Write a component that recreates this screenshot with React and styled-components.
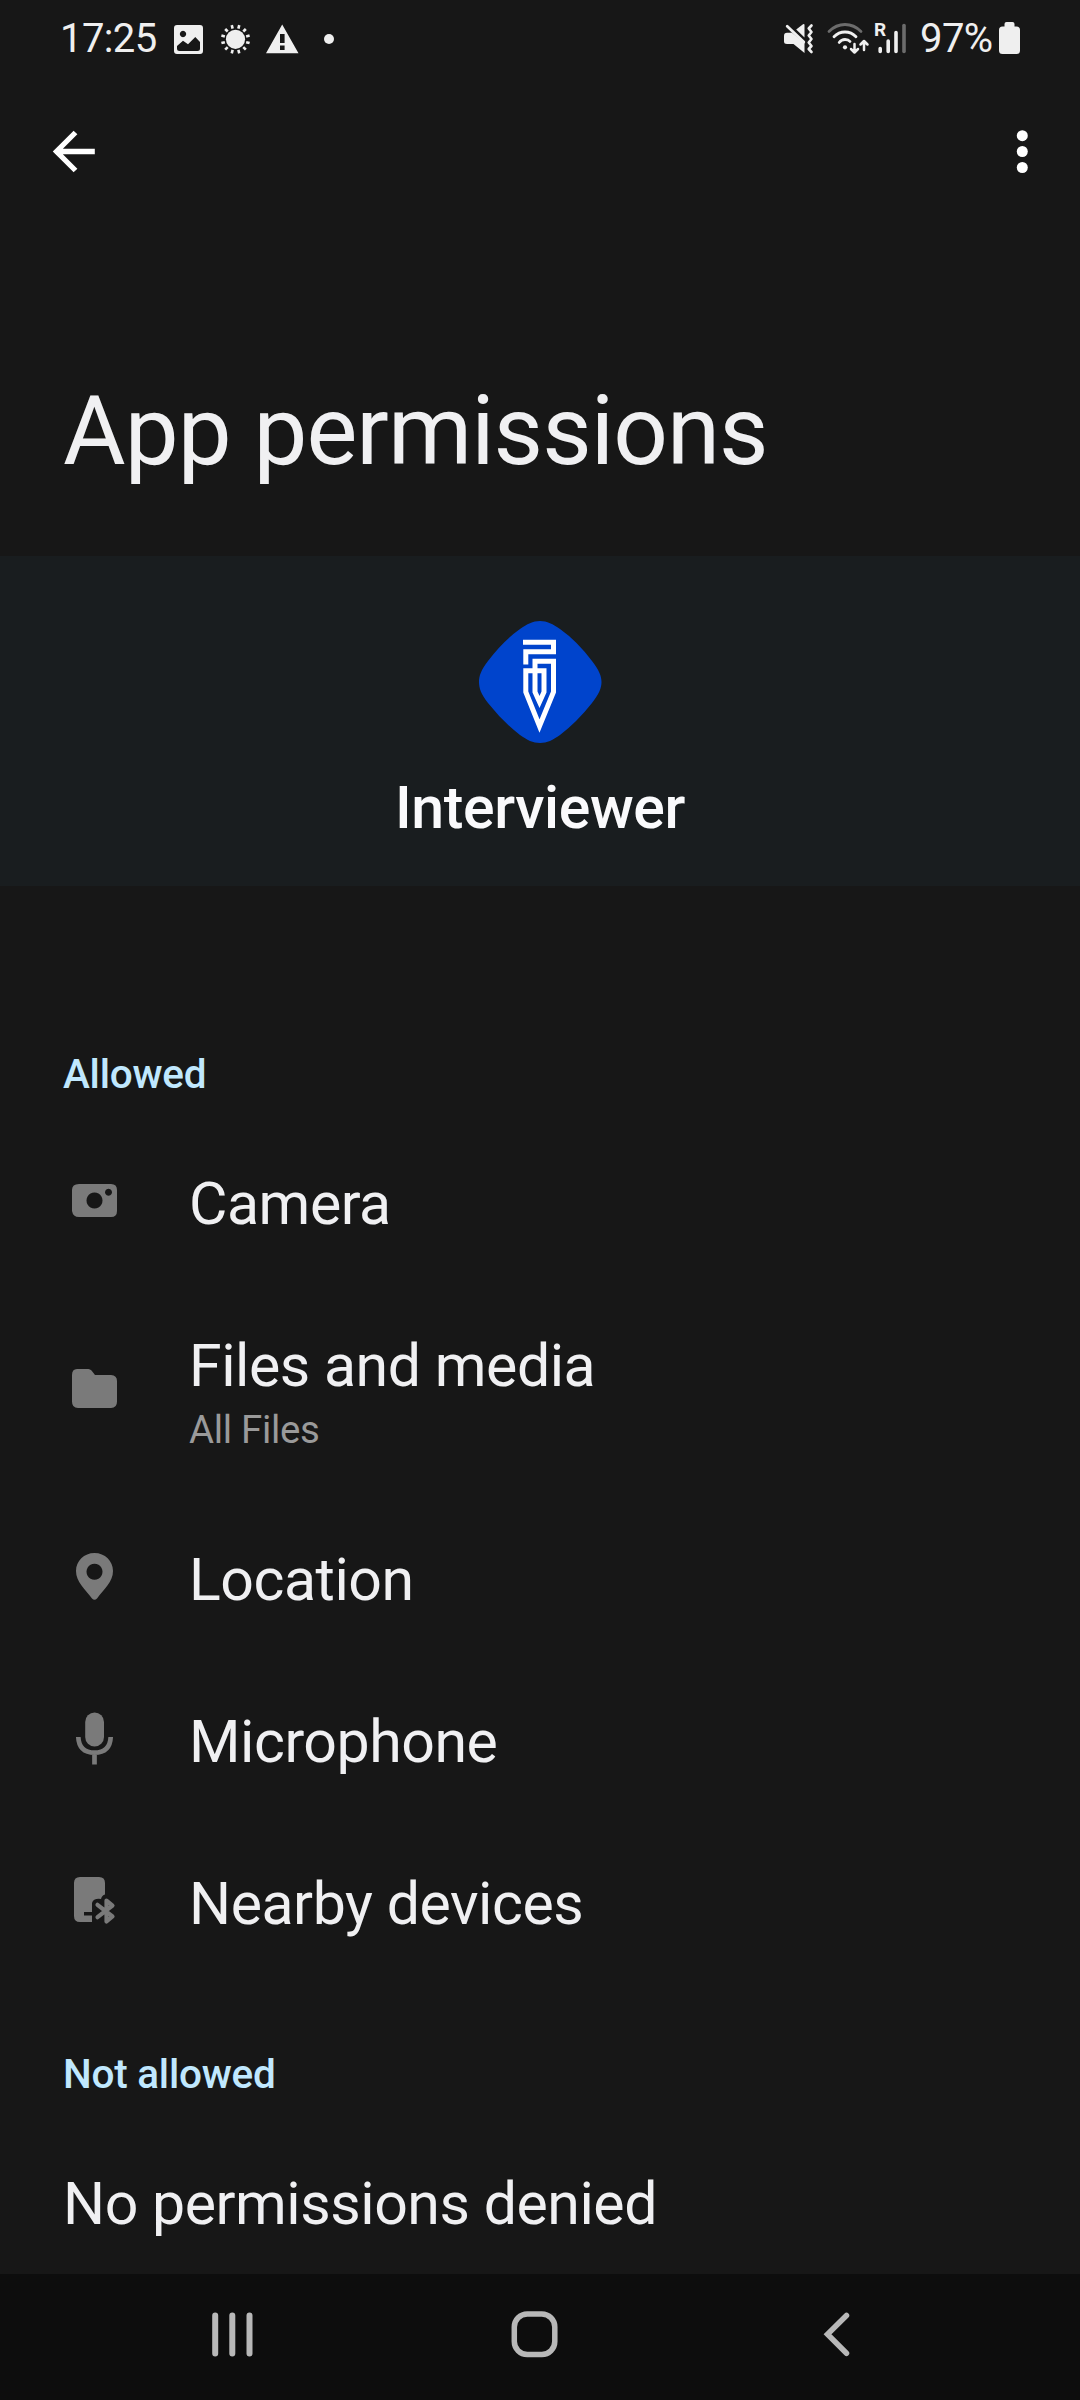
import React from "react";
import styled, { createGlobalStyle } from "styled-components";

const GlobalStyle = createGlobalStyle`
  body { margin: 0; background: #171717; }
  * { box-sizing: border-box; }
  svg { display: block; flex: none; }
`;

const Screen = styled.div`
  width: 1080px;
  height: 2400px;
  display: flex;
  flex-direction: column;
  overflow: hidden;
  background: #171717;
  color: #f0f0f2;
  font-family: Roboto, "Liberation Sans", sans-serif;
`;

const StatusBar = styled.header`
  height: 80px;
  flex: none;
  display: flex;
  justify-content: space-between;
  padding: 0 57px 0 60px;
  color: #efefef;
  font-size: 40px;
  line-height: 78px;
`;

const StatusGroup = styled.div`
  display: flex;
  white-space: nowrap;
`;

const StatusText = styled.span`
  width: ${(p) => p.$width}px;
  letter-spacing: -0.6px;
`;

const AppBar = styled.nav`
  height: 144px;
  flex: none;
  display: flex;
  justify-content: space-between;
  color: #fff;
`;

const Title = styled.h1`
  margin: 0;
  height: 332px;
  flex: none;
  padding: 151px 0 0 63px;
  font-size: 96px;
  font-weight: 400;
  line-height: 112px;
  letter-spacing: -0.95px;
`;

const AppHeader = styled.section`
  height: 330px;
  flex: none;
  display: flex;
  flex-direction: column;
  align-items: center;
  padding-top: 64px;
  background: #191d1f;
`;

const AppName = styled.div`
  margin-top: 30px;
  font-size: 59px;
  font-weight: 500;
  line-height: 68px;
  letter-spacing: -0.4px;
  color: #fafafc;
`;

const Content = styled.main`
  flex: 1;
  display: flex;
  flex-direction: column;
`;

const SectionLabel = styled.h2`
  margin: 0;
  height: 44px;
  margin-top: ${(p) => p.$gap}px;
  padding-left: 63px;
  font-size: 40.5px;
  font-weight: 500;
  line-height: 44px;
  letter-spacing: -0.25px;
  color: #c0e8fe;
`;

const List = styled.div`
  margin-top: 27px;
`;

const Row = styled.div`
  height: ${(p) => (p.$tall ? 214 : 162)}px;
  display: flex;
  align-items: center;
`;

const IconCell = styled.div`
  width: 189px;
  padding: 0 0 6px 61px;
  color: #7a7a7a;
`;

const RowText = styled.div`
  display: flex;
  flex-direction: column;
  padding-top: ${(p) => (p.$tall ? 6 : 0)}px;
`;

const Label = styled.div`
  font-size: 59px;
  line-height: 68px;
  letter-spacing: -0.45px;
`;

const Detail = styled.div`
  margin-top: 2px;
  font-size: 38.4px;
  line-height: 56px;
  letter-spacing: -0.3px;
  color: #9a9a9a;
`;

const Empty = styled(Label)`
  margin-top: 74px;
  padding-left: 63px;
`;

const NavBar = styled.footer`
  height: 126px;
  flex: none;
  display: flex;
  background: #0d0d0d;
`;

const StatusLeftIcons = () => (
  <svg width="180" height="80" viewBox="160 0 180 80" fill="#efefef">
    <path fillRule="evenodd" d="M177 25h23a3 3 0 0 1 3 3v23a3 3 0 0 1-3 3h-23a3 3 0 0 1-3-3V28a3 3 0 0 1 3-3zM183 30.800a3.200 3.200 0 1 0 .01 0zM177 46v2.500q0 2.500 2.500 2.500h18q2.500 0 2.500-2.500V42l-4.700-5-7.300 7.300-5-3.500z" />
    <circle cx="235.500" cy="39.300" r="9.600" />
    <g stroke="#efefef" strokeWidth="2.600">
      {Array.from({ length: 12 }, (_, i) => (
        <path key={i} d="M235.500 24.700v3.600" transform={`rotate(${15 + i * 30} 235.500 39.300)`} />
      ))}
    </g>
    <path fillRule="evenodd" d="M282.200 24.500 298.500 53.200H266zM280 34v9h4.600v-9zM280 45.500v4.500h4.600v-4.500z" />
    <circle cx="329" cy="39" r="5" />
  </svg>
);

const StatusRightIcons = () => (
  <svg width="146" height="80" viewBox="774 0 146 80" fill="none" stroke="#efefef" strokeLinecap="round">
    <path stroke="none" fill="#efefef" d="M787 32.800H792L804.500 43V53L793.500 44H787Q784 44 784 41.500V36Q784 32.800 787 32.800zM796.200 29.500 803 24.300Q804.500 23.500 804.500 25V37.500z" />
    <path strokeWidth="2.800" d="M787.200 26.200 803.800 42" />
    <path strokeWidth="2.600" strokeLinejoin="round" d="M811.500 25.500 808.700 28.500 811.500 32 808.700 35.500 811.500 39 808.700 42.500 811.500 46 808.700 49 811.500 52" />
    <g strokeWidth="2.800">
      <path stroke="#6c6c6c" d="M829 31.500Q836 24.500 845 24.500T861 31.500" />
      <path d="M834 36.800Q838.500 32 845 32T856 36.800M839.200 42.500Q841.500 39.500 845 39.500T850 41.500" />
    </g>
    <circle cx="845" cy="47.300" r="2.100" fill="#efefef" stroke="none" />
    <path strokeWidth="2.500" strokeLinejoin="round" d="M854.500 44V52M851 49 854.500 52.500 858 49M864 50V41.500M860.500 44.500 864 41 867.500 44.500" />
    <text x="874" y="36.300" fill="#efefef" stroke="none" fontFamily="Roboto, sans-serif" fontWeight="700" fontSize="19">R</text>
    <g strokeWidth="3.600">
      <path d="M880.200 48.500V51.500M888.200 41V51.500M896 32.500V51.500" />
      <path stroke="#6c6c6c" d="M904 25.500V51.500" />
    </g>
  </svg>
);

const BatteryIcon = () => (
  <svg width="26" height="80" viewBox="997 0 26 80" fill="#efefef">
    <path d="M1006.500 22h6q2 0 2 2v2.500h2q3.500 0 3.500 3.500v20.500q0 3.500-3.500 3.500h-14q-3.500 0-3.500-3.500v-20.500q0-3.500 3.500-3.500h2V24q0-2 2-2z" />
  </svg>
);

const BackArrow = () => (
  <svg width="120" height="144" viewBox="0 80 120 144" fill="none" stroke="#fff" strokeWidth="5.300">
    <path d="M94.800 151.500H57M75.500 132.500 56.500 151.500 75.500 170.500" />
  </svg>
);

const MoreIcon = () => (
  <svg width="80" height="144" viewBox="1000 80 80 144" fill="#fff">
    <circle cx="1022.300" cy="135.700" r="5.500" />
    <circle cx="1022.300" cy="151.500" r="5.500" />
    <circle cx="1022.300" cy="167.500" r="5.500" />
  </svg>
);

const AppLogo = () => (
  <svg width="124" height="124" viewBox="478 620 124 124">
    <path fill="#0044cc" d="M540 621C547 621 553 624 560 629Q577 641 592 661C599 670 601.500 676 601.500 682S599 694 592 703Q577 722 560 735C553 740 547 743 540 743S527 740 520 735Q503 722 488 703C481 694 479 688 479 682S481 670 488 661Q503 641 520 629C527 624 533 621 540 621z" />
    <path fill="none" stroke="#fff" strokeWidth="5" d="M523 642.300H553.500V651.800H525.800V664.500M535 674.500V661.300H553.500V692L539.500 726 525.800 692V670.700H544V692L539.500 702 535 692V674" />
  </svg>
);

const CameraIcon = () => (
  <path fillRule="evenodd" d="M14 12H46Q52 12 52 18V39Q52 45 46 45H14Q8 45 7 39V18Q7 12 14 12zM29.500 20.500a8 8 0 1 0 .01 0zM43.500 16.700a3.500 3.500 0 1 0 .01 0z" />
);
const FolderIcon = () => (
  <path d="M12 9.500H23.500Q25 9.500 26.500 11L30 15.500H46Q52 16 52 21.500V42Q52 48.500 46 48.500H13Q7 48.500 7 42V15.500Q7 9.500 12 9.500z" />
);
const PinIcon = () => (
  <path fillRule="evenodd" d="M29.500 7C40 7 48 15 48 25C48 36 39 43 32 52.500Q29.500 55 27 52.500C20 43 11 36 11 25C11 15 19 7 29.500 7zM29.500 17.800a8 8 0 1 0 .01 0z" />
);
const MicIcon = () => (
  <>
    <rect x="20.200" y="4.500" width="18.800" height="34" rx="9.400" />
    <path fill="none" stroke="currentColor" strokeWidth="4.700" d="M13.300 29Q14 44.700 29.500 44.700T45.700 29M29.500 44.500V56.500" />
  </>
);
const NearbyIcon = () => (
  <>
    <path d="M15 8H34Q40 8 40 14V25.500Q37 26 36 30Q28.500 29 27 34V43H19V46.500H27V53H15Q9 53 9 47V14Q9 8 15 8z" />
    <path fill="none" stroke="currentColor" strokeWidth="4.200" strokeLinecap="round" strokeLinejoin="round" d="M32.500 35.800 47.500 47.500 41.500 52.500V31.500L47.500 36.500 32.500 48.200" />
  </>
);

const permissions = [
  { name: "Camera", Icon: CameraIcon, nudge: 1 },
  { name: "Files and media", detail: "All Files", Icon: FolderIcon, nudge: 0.5 },
  { name: "Location", Icon: PinIcon, nudge: -1 },
  { name: "Microphone", Icon: MicIcon, nudge: -1 },
  { name: "Nearby devices", Icon: NearbyIcon, nudge: -2 },
];

export default function App() {
  return (
    <Screen>
      <GlobalStyle />
      <StatusBar>
        <StatusGroup>
          <StatusText $width={100}>17:25</StatusText>
          <StatusLeftIcons />
        </StatusGroup>
        <StatusGroup>
          <StatusRightIcons />
          <StatusText $width={77}>97%</StatusText>
          <BatteryIcon />
        </StatusGroup>
      </StatusBar>
      <AppBar>
        <BackArrow />
        <MoreIcon />
      </AppBar>
      <Title>App permissions</Title>
      <AppHeader>
        <AppLogo />
        <AppName>Interviewer</AppName>
      </AppHeader>
      <Content>
        <SectionLabel $gap={166}>Allowed</SectionLabel>
        <List>
          {permissions.map(({ name, detail, Icon, nudge }) => (
            <Row key={name} $tall={Boolean(detail)}>
              <IconCell>
                <svg width="60" height="60" viewBox={`-4 ${-nudge} 60 60`} fill="currentColor">
                  <Icon />
                </svg>
              </IconCell>
              <RowText $tall={Boolean(detail)}>
                <Label>{name}</Label>
                {detail && <Detail>{detail}</Detail>}
              </RowText>
            </Row>
          ))}
        </List>
        <SectionLabel $gap={67}>Not allowed</SectionLabel>
        <Empty>No permissions denied</Empty>
      </Content>
      <NavBar>
        <svg width="1080" height="126" viewBox="0 2274 1080 126" fill="none" stroke="#b8b8b8" strokeWidth="6" strokeLinecap="round">
          <path d="M215.200 2315.500V2353.500M232.300 2315.500V2353.500M249.500 2315.500V2353.500" />
          <rect x="514.300" y="2314" width="40.500" height="40.500" rx="13" strokeWidth="5.500" />
          <path strokeWidth="5.500" d="M846.500 2315.500 827.500 2334.300 846.500 2353.300" />
        </svg>
      </NavBar>
    </Screen>
  );
}
